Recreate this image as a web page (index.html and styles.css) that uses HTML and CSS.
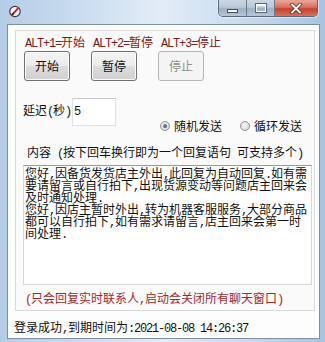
FILE: index.html
```html
<!DOCTYPE html>
<html>
<head>
<meta charset="utf-8">
<link rel="stylesheet" href="styles.css">
</head>
<body>
<div class="window">
  <div class="titlebar">
    <svg class="appicon" width="12" height="13" viewBox="0 0 12 13">
      <circle cx="6" cy="6.5" r="5.2" fill="#f4f4f4" stroke="#3a3a3a" stroke-width="1.2"/>
      <path d="M3 10 L9.2 3.2" stroke="#c0262c" stroke-width="2" stroke-linecap="round"/>
      <path d="M3.2 9.6 L4.8 8.2" stroke="#222" stroke-width="1.3"/>
    </svg>
    <div class="controls">
      <div class="ctl min"><span class="minbar"></span></div>
      <div class="ctl max"><span class="maxbox"></span></div>
      <div class="ctl close">
        <svg width="14" height="11" viewBox="0 0 14 11">
          <path d="M3 1.5 L11 9.5 M11 1.5 L3 9.5" stroke="#5a2a22" stroke-width="3.4" stroke-linecap="square"/>
          <path d="M3 1.5 L11 9.5 M11 1.5 L3 9.5" stroke="#ffffff" stroke-width="1.9" stroke-linecap="square"/>
        </svg>
      </div>
    </div>
  </div>
  <div class="client">
    <div class="panel">
      <div class="hotkeys">
        <span><span class="lat">ALT+1=</span>开始</span>
        <span><span class="lat">ALT+2=</span>暂停</span>
        <span><span class="lat">ALT+3=</span>停止</span>
      </div>
      <div class="buttons">
        <div class="btn">开始</div>
        <div class="btn">暂停</div>
        <div class="btn disabled">停止</div>
      </div>
      <div class="delayrow">
        <div class="delaylabel">延迟<span class="lat">(</span>秒<span class="lat">)</span></div>
        <div class="numbox"><span class="lat">5</span></div>
        <div class="radios">
          <div class="radio"><span class="dot checked"></span>随机发送</div>
          <div class="radio"><span class="dot"></span>循环发送</div>
        </div>
      </div>
      <div class="contentlabel">内容<span class="lat"> (</span>按下回车换行即为一个回复语句<span class="lat"> </span>可支持多个<span class="lat">)</span></div>
      <div class="textarea">
        <div class="ln">您好<span class="lat">,</span>因备货发货店主外出<span class="lat">,</span>此回复为自动回复<span class="lat">.</span>如有需</div>
        <div class="ln">要请留言或自行拍下<span class="lat">,</span>出现货源变动等问题店主回来会</div>
        <div class="ln">及时通知处理<span class="lat">.</span></div>
        <div class="ln">您好<span class="lat">,</span>因店主暂时外出<span class="lat">,</span>转为机器客服服务<span class="lat">,</span>大部分商品</div>
        <div class="ln">都可以自行拍下<span class="lat">,</span>如有需求请留言<span class="lat">,</span>店主回来会第一时</div>
        <div class="ln">间处理<span class="lat">.</span></div>
      </div>
      <div class="note"><span class="lat">(</span>只会回复实时联系人<span class="lat">,</span>启动会关闭所有聊天窗口<span class="lat">)</span></div>
    </div>
    <div class="status">登录成功<span class="lat">,</span>到期时间为<span class="lat">:2021-08-08 14:26:37</span></div>
  </div>
</div>
</body>
</html>
```
FILE: styles.css
```css
html, body {
  margin: 0;
  padding: 0;
}
body {
  font-family: "Noto Sans CJK SC", "Liberation Mono", sans-serif;
  font-size: 12px;
  line-height: 12px;
  color: #111;
  background: #c3d7ed;
}
.window {
  width: 325px;
  height: 342px;
  display: flex;
  flex-direction: column;
  background: linear-gradient(to right, #b4cde7 0%, #cfe0f2 30%, #e2ecf7 50%, #c8dbef 75%, #a9c3e0 100%);
  overflow: hidden;
}
.titlebar {
  height: 24px;
  flex: none;
  display: flex;
  justify-content: space-between;
  align-items: flex-start;
}
.appicon {
  margin: 5px 0 0 9px;
}
.controls {
  display: flex;
  margin-right: 7px;
  height: 16px;
  border: 1px solid #5b6678;
  border-top: none;
  border-radius: 0 0 5px 5px;
  overflow: hidden;
  box-shadow: 0 0 0 1px rgba(255,255,255,0.5);
}
.ctl {
  height: 16px;
  display: flex;
  align-items: center;
  justify-content: center;
}
.min, .max {
  width: 27px;
  background: linear-gradient(to bottom, #c9d6e4 0%, #b9c8d8 45%, #9fb0c5 55%, #b6c6d8 100%);
  border-right: 1px solid #6e7c90;
}
.minbar {
  display: block;
  width: 9px;
  height: 2px;
  margin-top: 5px;
  background: #fff;
  border: 1px solid #3f4a5c;
}
.maxbox {
  display: block;
  width: 8px;
  height: 5px;
  border: 1px solid #fff;
  border-top-width: 2px;
  outline: 1px solid #5a6678;
}
.close {
  width: 42px;
  background: linear-gradient(to bottom, #e8a89a 0%, #d8715e 45%, #c5432e 55%, #d5715a 100%);
}
.client {
  margin: 0 5px 0 7px;
  height: 313px;
  border: 1px solid #7f8fa3;
  background: #fdfdfd;
  display: flex;
  flex-direction: column;
}
.panel {
  margin: 5px 4px 0 7px;
  height: 279px;
  border: 1px solid #d8d8d8;
  background: #fafafa;
  display: flex;
  flex-direction: column;
}
.lat {
  font-family: "Liberation Mono", monospace;
  letter-spacing: -1.2px;
}
.hotkeys {
  margin: 5px 0 0 9px;
  display: flex;
  gap: 8px;
  color: #7a1a22;
  height: 12px;
}
.buttons {
  margin: 3px 0 0 8px;
  display: flex;
  gap: 21px;
}
.btn {
  width: 44px;
  height: 28px;
  border: 1px solid #707070;
  border-radius: 3px;
  background: linear-gradient(to bottom, #f4f4f4 0%, #ececec 48%, #dddddd 52%, #cfcfcf 100%);
  box-shadow: inset 0 0 0 1px #fcfcfc;
  display: flex;
  align-items: center;
  justify-content: center;
  color: #111;
}
.btn.disabled {
  border-color: #b3b7ba;
  background: #f4f4f4;
  box-shadow: none;
  color: #8d8d8d;
}
.delayrow {
  margin: 18px 0 0 7px;
  display: flex;
  align-items: flex-start;
}
.delaylabel {
  margin-top: 5px;
  width: 49px;
}
.numbox {
  width: 41px;
  height: 26px;
  border: 1px solid #dde1e6;
  border-top-color: #c4c8cd;
  background: #fff;
  padding-left: 1px;
  display: flex;
  align-items: center;
  margin-top: -1px;
}
.radios {
  margin: 21px 0 0 44px;
  display: flex;
  gap: 18px;
}
.radio {
  display: flex;
  align-items: center;
  gap: 4px;
}
.dot {
  width: 10px;
  height: 10px;
  border-radius: 50%;
  box-sizing: border-box;
  border: 1px solid #8e8f8f;
  background: radial-gradient(circle at 40% 40%, #f8f8f8 0%, #dcdcdc 70%, #c8c8c8 100%);
  position: relative;
}
.dot.checked::after {
  content: "";
  position: absolute;
  left: 2px;
  top: 2px;
  width: 4px;
  height: 4px;
  border-radius: 50%;
  background: radial-gradient(circle at 40% 35%, #7d8fa8 0%, #2c3e58 100%);
}
.contentlabel {
  margin: 14px 0 0 11px;
  height: 12px;
}
.textarea {
  margin: 7px 2px 0 7px;
  height: 117px;
  border: 1px solid #d3d8de;
  border-top-color: #9a9a9a;
  background: #fff;
  padding: 1px 0 0 1px;
}
.ln {
  line-height: 12px;
  height: 12px;
  white-space: nowrap;
}
.note {
  margin: 7px 0 0 9px;
  color: #9a2a2a;
}
.status {
  margin: 10px 0 0 6px;
  color: #111;
}
```
